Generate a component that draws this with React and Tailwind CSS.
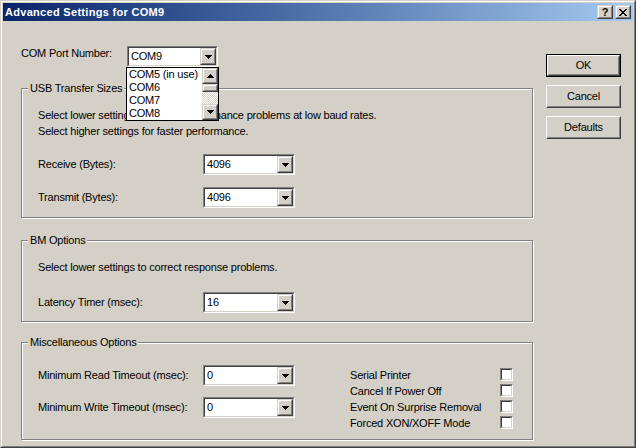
import React from "react";

function DownTri() {
  return (
    <svg width="7" height="4" viewBox="0 0 7 4" shapeRendering="crispEdges">
      <rect x="0" y="0" width="7" height="1" fill="#000" />
      <rect x="1" y="1" width="5" height="1" fill="#000" />
      <rect x="2" y="2" width="3" height="1" fill="#000" />
      <rect x="3" y="3" width="1" height="1" fill="#000" />
    </svg>
  );
}

function UpTri() {
  return (
    <svg width="7" height="4" viewBox="0 0 7 4" shapeRendering="crispEdges">
      <rect x="3" y="0" width="1" height="1" fill="#000" />
      <rect x="2" y="1" width="3" height="1" fill="#000" />
      <rect x="1" y="2" width="5" height="1" fill="#000" />
      <rect x="0" y="3" width="7" height="1" fill="#000" />
    </svg>
  );
}

function CloseGlyph() {
  const rows = [
    [0, 6],
    [1, 5],
    [2, 4],
    [3],
    [2, 4],
    [1, 5],
    [0, 6],
  ];
  return (
    <svg width="8" height="7" viewBox="0 0 8 7" shapeRendering="crispEdges">
      {rows.map((xs, y) =>
        xs.map((x) => <rect key={`${x}-${y}`} x={x} y={y} width="2" height="1" fill="#000" />)
      )}
    </svg>
  );
}

function Raised({ className, innerClassName, children }) {
  return (
    <div
      className={`border border-t-[#d4d0c8] border-l-[#d4d0c8] border-b-[#404040] border-r-[#404040] bg-[#d4d0c8] ${className}`}
    >
      <div
        className={`h-full border border-t-white border-l-white border-b-[#808080] border-r-[#808080] flex items-center justify-center ${innerClassName || ""}`}
      >
        {children}
      </div>
    </div>
  );
}

function Combo({ value, w }) {
  return (
    <div
      className={`${w} h-[21px] border border-t-[#808080] border-l-[#808080] border-b-white border-r-white`}
    >
      <div className="h-full border border-t-[#404040] border-l-[#404040] border-b-[#d4d0c8] border-r-[#d4d0c8] bg-white flex items-center">
        <span className="flex-1 pl-[2px] leading-[13px] whitespace-nowrap">{value}</span>
        <Raised className="w-[16px] h-full shrink-0">
          <DownTri />
        </Raised>
      </div>
    </div>
  );
}

function Checkbox() {
  return (
    <div className="w-[13px] h-[13px] border border-t-[#808080] border-l-[#808080] border-b-white border-r-white">
      <div className="h-full border border-t-[#404040] border-l-[#404040] border-b-[#d4d0c8] border-r-[#d4d0c8] bg-white" />
    </div>
  );
}

function Group({ title, className, children }) {
  return (
    <div
      className={`w-[512px] border border-[#808080] shadow-[inset_1px_1px_0_#ffffff,1px_1px_0_#ffffff] ${className}`}
    >
      <div className="-mt-[7px] ml-[6px] w-fit px-[2px] bg-[#d4d0c8] leading-[13px] whitespace-nowrap">
        {title}
      </div>
      {children}
    </div>
  );
}

function Row({ label, value }) {
  return (
    <div className="flex items-center h-[21px]">
      <span className="w-[165px] leading-[13px] whitespace-nowrap">{label}</span>
      <Combo value={value} w="w-[92px]" />
    </div>
  );
}

function Button({ label, isDefault }) {
  if (isDefault) {
    return (
      <div className="w-[75px] h-[23px] border border-black">
        <div className="h-full border border-t-white border-l-white border-b-[#404040] border-r-[#404040]">
          <div className="h-full border border-t-[#d4d0c8] border-l-[#d4d0c8] border-b-[#808080] border-r-[#808080] flex items-center justify-center leading-[13px]">
            {label}
          </div>
        </div>
      </div>
    );
  }
  return (
    <div className="w-[75px] h-[23px] border border-t-white border-l-white border-b-[#404040] border-r-[#404040]">
      <div className="h-full border border-t-[#d4d0c8] border-l-[#d4d0c8] border-b-[#808080] border-r-[#808080] flex items-center justify-center leading-[13px]">
        {label}
      </div>
    </div>
  );
}

function DropList() {
  const items = ["COM5 (in use)", "COM6", "COM7", "COM8"];
  return (
    <div className="absolute left-[-1px] top-[21px] w-[93px] h-[54px] border border-black bg-white flex z-10">
      <div className="flex-1 flex flex-col">
        {items.map((it) => (
          <div key={it} className="h-[13px] leading-[13px] pl-[2px] whitespace-nowrap">
            {it}
          </div>
        ))}
      </div>
      <div className="w-[16px] flex flex-col">
        <Raised className="w-[16px] h-[16px] shrink-0">
          <UpTri />
        </Raised>
        <Raised className="w-[16px] h-[8px] shrink-0" />
        <div className="flex-1 bg-[image:repeating-conic-gradient(#d4d0c8_0%_25%,#ffffff_0%_50%)] bg-[length:2px_2px]" />
        <Raised className="w-[16px] h-[16px] shrink-0">
          <DownTri />
        </Raised>
      </div>
    </div>
  );
}

export default function App() {
  return (
    <div className="w-[636px] h-[448px] bg-[#d4d0c8] border border-t-[#d4d0c8] border-l-[#d4d0c8] border-b-[#404040] border-r-[#404040] font-['Liberation_Sans',Arial,sans-serif] text-[11px] tracking-[-0.2px] text-black overflow-hidden">
      <div className="h-full border border-t-white border-l-white border-b-[#808080] border-r-[#808080] p-[1px] flex flex-col">
        {/* Title bar */}
        <div className="h-[18px] shrink-0 flex items-center bg-linear-to-r from-[#0a246a] to-[#a6caf0]">
          <span className="pl-[2px] text-white font-bold text-[11px] tracking-[0.3px] leading-[13px] whitespace-nowrap">
            Advanced Settings for COM9
          </span>
          <div className="ml-auto flex items-center gap-[2px] mr-[2px]">
            <Raised className="w-[16px] h-[14px]">
              <span className="font-bold text-[11px] leading-[10px] text-black">?</span>
            </Raised>
            <Raised className="w-[16px] h-[14px]">
              <CloseGlyph />
            </Raised>
          </div>
        </div>

        {/* Body */}
        <div className="flex flex-1 pl-[18px]">
          <div className="w-[512px] flex flex-col pt-[25px]">
            {/* COM port row */}
            <div className="flex items-start h-[21px]">
              <span className="w-[106px] mt-[1px] leading-[13px] whitespace-nowrap">COM Port Number:</span>
              <div className="relative">
                <Combo value="COM9" w="w-[91px]" />
                <DropList />
              </div>
            </div>

            <Group title="USB Transfer Sizes" className="mt-[21px] pb-[9px]">
              <div className="px-[16px]">
                <div className="mt-[12px] leading-[16px] whitespace-nowrap">
                  <div>Select lower settings to correct performance problems at low baud rates.</div>
                  <div>Select higher settings for faster performance.</div>
                </div>
                <div className="mt-[15px] flex flex-col gap-[12px]">
                  <Row label="Receive (Bytes):" value="4096" />
                  <Row label="Transmit (Bytes):" value="4096" />
                </div>
              </div>
            </Group>

            <Group title="BM Options" className="mt-[22px] pb-[8px]">
              <div className="px-[16px]">
                <div className="mt-[12px] leading-[16px] whitespace-nowrap">
                  Select lower settings to correct response problems.
                </div>
                <div className="mt-[17px]">
                  <Row label="Latency Timer (msec):" value="16" />
                </div>
              </div>
            </Group>

            <Group title="Miscellaneous Options" className="mt-[20px] pb-[8px]">
              <div className="px-[16px] flex items-start">
                <div className="mt-[16px] flex flex-col gap-[11px]">
                  <Row label="Minimum Read Timeout (msec):" value="0" />
                  <Row label="Minimum Write Timeout (msec):" value="0" />
                </div>
                <div className="ml-[55px] mt-[18px] flex flex-col">
                  {[
                    "Serial Printer",
                    "Cancel If Power Off",
                    "Event On Surprise Removal",
                    "Forced XON/XOFF Mode",
                  ].map((t) => (
                    <div key={t} className="h-[16px] flex items-start">
                      <span className="w-[150px] leading-[16px] whitespace-nowrap">{t}</span>
                      <div className="mt-[1px]">
                        <Checkbox />
                      </div>
                    </div>
                  ))}
                </div>
              </div>
            </Group>
          </div>

          <div className="ml-[13px] pt-[33px] flex flex-col gap-[8px]">
            <Button label="OK" isDefault />
            <Button label="Cancel" />
            <Button label="Defaults" />
          </div>
        </div>
      </div>
    </div>
  );
}
